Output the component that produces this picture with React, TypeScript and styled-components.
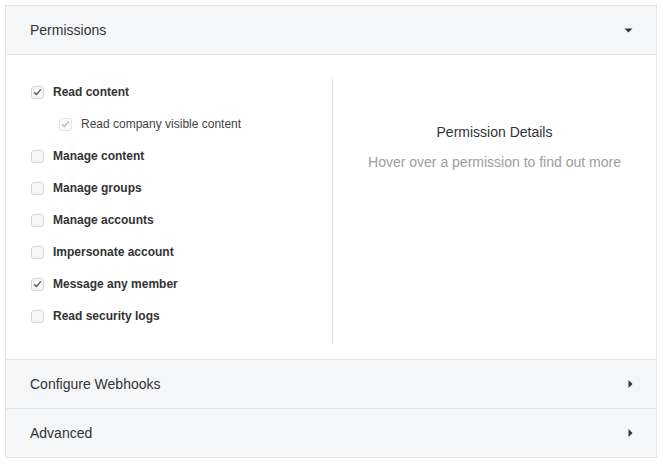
import React from "react";
import styled, { createGlobalStyle } from "styled-components";

const Global = createGlobalStyle`
  html, body { margin: 0; padding: 0; background: #ffffff; }
  body { font-family: "Liberation Sans", Arial, sans-serif; color: #333; }
`;

const Card = styled.div`
  margin: 5px 0 0 5px;
  width: 650px;
  border: 1px solid #e2e4e7;
  background: #fff;
`;

const Header = styled.div<{ $first?: boolean }>`
  height: 48px;
  display: flex;
  align-items: center;
  justify-content: space-between;
  padding: 0 23px 0 24px;
  background: #f5f6f8;
  border-top: ${(p) => (p.$first ? "none" : "1px solid #e2e4e7")};
  border-bottom: ${(p) => (p.$first ? "1px solid #e2e4e7" : "none")};
  font-size: 14px;
  color: #333;
`;

const Body = styled.div`
  padding: 24px 0 15px 0;
  display: grid;
  grid-template-columns: 326px 1fr;
`;

const List = styled.div`
  display: flex;
  flex-direction: column;
  gap: 8px;
  padding: 1px 0 16px 25px;
`;

const Row = styled.label<{ $indent?: boolean }>`
  height: 24px;
  display: flex;
  align-items: center;
  gap: 9px;
  padding-left: ${(p) => (p.$indent ? "28px" : "0")};
`;

const Box = styled.span<{ $disabled?: boolean }>`
  width: 11px;
  height: 11px;
  border: 1px solid ${(p) => (p.$disabled ? "#e3e4e6" : "#d3d5d8")};
  border-radius: 3px;
  background: ${(p) => (p.$disabled ? "#fafafa" : "#f7f7f8")};
  display: flex;
  align-items: center;
  justify-content: center;
`;

const Label = styled.span<{ $bold?: boolean }>`
  font-size: 12px;
  font-weight: ${(p) => (p.$bold ? 700 : 400)};
  color: ${(p) => (p.$bold ? "#333" : "#444")};
`;

const Details = styled.div`
  border-left: 1px solid #e0e1e3;
  display: flex;
  flex-direction: column;
  align-items: center;
  padding-top: 45px;
`;

const DetailsTitle = styled.div`
  font-size: 14px;
  line-height: 16px;
  color: #333;
`;

const DetailsHint = styled.div`
  margin-top: 14px;
  font-size: 14px;
  line-height: 16px;
  color: #9b9da3;
`;

const Check = ({ disabled }: { disabled?: boolean }) => (
  <svg width="9" height="8" viewBox="0 0 9 8">
    <path
      d="M1 4.2 L3.4 6.5 L8 1.4"
      fill="none"
      stroke={disabled ? "#b8babd" : "#555"}
      strokeWidth="1.4"
    />
  </svg>
);

const CaretDown = () => (
  <svg width="9" height="5" viewBox="0 0 9 5">
    <path d="M0.5 0.5 L8.5 0.5 L4.5 4.5 Z" fill="#333" />
  </svg>
);

const CaretRight = () => (
  <svg width="5" height="8" viewBox="0 0 5 8">
    <path d="M0.5 0 L4.5 4 L0.5 8 Z" fill="#333" />
  </svg>
);

const items: { label: string; checked?: boolean; sub?: boolean }[] = [
  { label: "Read content", checked: true },
  { label: "Read company visible content", checked: true, sub: true },
  { label: "Manage content" },
  { label: "Manage groups" },
  { label: "Manage accounts" },
  { label: "Impersonate account" },
  { label: "Message any member", checked: true },
  { label: "Read security logs" },
];

export default function App() {
  return (
    <>
      <Global />
      <Card>
        <Header $first>
          <span>Permissions</span>
          <CaretDown />
        </Header>
        <Body>
          <List>
            {items.map((it) => (
              <Row key={it.label} $indent={it.sub}>
                <Box $disabled={it.sub}>{it.checked && <Check disabled={it.sub} />}</Box>
                <Label $bold={!it.sub}>{it.label}</Label>
              </Row>
            ))}
          </List>
          <Details>
            <DetailsTitle>Permission Details</DetailsTitle>
            <DetailsHint>Hover over a permission to find out more</DetailsHint>
          </Details>
        </Body>
        <Header>
          <span>Configure Webhooks</span>
          <CaretRight />
        </Header>
        <Header>
          <span>Advanced</span>
          <CaretRight />
        </Header>
      </Card>
    </>
  );
}
